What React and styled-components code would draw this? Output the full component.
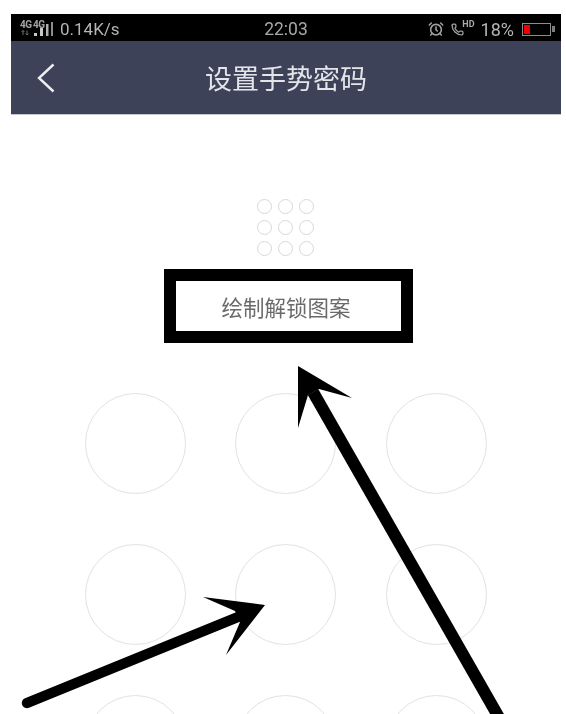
import React from 'react';
import styled, { createGlobalStyle } from 'styled-components';
import { AlarmClock, Phone } from 'lucide-react';

const GlobalStyle = createGlobalStyle`
  html, body {
    margin: 0;
    padding: 0;
    background: #fff;
  }
`;

const Page = styled.div`
  position: relative;
  width: 566px;
  height: 714px;
  padding: 14px 5px 0 11px;
  box-sizing: border-box;
  overflow: hidden;
  background: #fff;
  font-family: Roboto, 'Noto Sans CJK SC', sans-serif;
  filter: blur(0.45px);
`;

const StatusBar = styled.div`
  display: grid;
  grid-template-columns: 1fr auto 1fr;
  align-items: center;
  height: 27px;
  background: #000;
  color: #b4b4b4;
  font-size: 18px;
  line-height: 27px;
`;

const StatusLeft = styled.div`
  display: flex;
  align-items: center;
  padding-left: 9px;
`;

const StatusRight = styled.div`
  display: flex;
  align-items: center;
  justify-content: flex-end;
  padding-right: 7px;
`;

const Clock = styled.span`
  color: #a8a8a8;
  font-size: 17.5px;
  padding-top: 2px;
`;

const NetworkTag = styled.span`
  font-size: 10px;
  font-weight: 700;
  line-height: 10px;
  width: ${(p) => p.$width}px;
  margin-top: -7px;
  color: #a4a4a4;
  letter-spacing: -0.4px;
`;

const Signal = styled.svg`
  width: 33px;
  height: 18px;
  margin: 0 7px 0 -24px;
`;

const Speed = styled.span`
  font-size: 17px;
  padding-top: 2px;
`;

const AlarmIcon = styled(AlarmClock)`
  width: 16px;
  height: 16px;
  margin-top: 1px;
  stroke-width: 2.4;
  color: #a0a0a0;
`;

const PhoneIcon = styled(Phone)`
  width: 13px;
  height: 13px;
  margin: 2px 0 0 7px;
  stroke-width: 2.4;
  color: #a0a0a0;
`;

const HdTag = styled.span`
  font-size: 9px;
  font-weight: 700;
  line-height: 9px;
  margin: -8px 6px 0 -2px;
  color: #a8a8a8;
`;

const Percent = styled.span`
  padding-top: 2px;
  margin-right: 8px;
`;

const Battery = styled.div`
  position: relative;
  width: 29px;
  height: 13px;
  box-sizing: border-box;
  padding: 1px;
  border: 1.5px solid #8c8c8c;
  margin: 1px 3px 0 0;

  &::after {
    content: '';
    position: absolute;
    top: 2px;
    right: -5px;
    width: 3px;
    height: 6px;
    background: #7c7c7c;
  }
`;

const BatteryLevel = styled.div`
  height: 100%;
  background: #f00000;
`;

const NavBar = styled.div`
  display: grid;
  grid-template-columns: 1fr auto 1fr;
  align-items: center;
  height: 73px;
  background: #3e4258;
  border-bottom: 1px solid #c4c6d0;
`;

const BackIcon = styled.svg`
  width: 20px;
  height: 32px;
  margin-left: 25px;
  display: block;
`;

const Title = styled.div`
  color: #e4e5e9;
  font-family: 'Noto Sans CJK SC', sans-serif;
  font-size: 27px;
  font-weight: 400;
  line-height: 40px;
`;

const Content = styled.div`
  display: flex;
  flex-direction: column;
  align-items: center;
  padding-top: 84px;
`;

const Preview = styled.div`
  display: grid;
  grid-template-columns: repeat(3, 15px);
  grid-auto-rows: 15px;
  gap: 6px;
  margin-left: -2px;
`;

const PreviewDot = styled.span`
  border: 1.75px solid #d8d8d8;
  border-radius: 50%;
`;

const Hint = styled.div`
  width: 249px;
  height: 74px;
  box-sizing: border-box;
  margin: 13px 0 50px 5px;
  padding-right: 5px;
  border: 12px solid #000;
  display: flex;
  align-items: center;
  justify-content: center;
  color: #6a6a6a;
  font-family: 'Noto Sans CJK SC', sans-serif;
  font-size: 21.5px;
  font-weight: 400;
`;

const Pattern = styled.div`
  display: grid;
  grid-template-columns: repeat(3, 101px);
  grid-auto-rows: 101px;
  column-gap: 49.5px;
  row-gap: 50px;
  margin-left: -1px;
`;

const PatternNode = styled.span`
  border: 1.5px solid #e2e2e2;
  border-radius: 50%;
`;

const Annotations = styled.svg`
  position: absolute;
  top: 0;
  left: 0;
  width: 566px;
  height: 714px;
  pointer-events: none;
`;

const dots = Array.from({ length: 9 }, (_, i) => i);

export default function App() {
  return (
    <Page>
      <GlobalStyle />
      <StatusBar>
        <StatusLeft>
          <NetworkTag $width={13}>4G</NetworkTag>
          <NetworkTag $width={11}>4G</NetworkTag>
          <Signal viewBox="0 0 33 18">
            <path d="M3 15 V10.5 M1.6 12 L3 10.5 L4.4 12 M7 10.5 V15 M5.6 13.5 L7 15 L8.4 13.5" fill="none" stroke="#6e6e6e" strokeWidth="1" />
            <rect x="14" y="13" width="3" height="3" fill="#c8c8c8" />
            <rect x="20" y="8" width="3" height="8" fill="#c8c8c8" />
            <rect x="26" y="4" width="2.5" height="12" fill="#b0b0b0" />
            <rect x="31" y="2" width="2" height="14" fill="#8c8c8c" />
          </Signal>
          <Speed>0.14K/s</Speed>
        </StatusLeft>
        <Clock>22:03</Clock>
        <StatusRight>
          <AlarmIcon />
          <PhoneIcon />
          <HdTag>HD</HdTag>
          <Percent>18%</Percent>
          <Battery>
            <BatteryLevel style={{ width: '22%' }} />
          </Battery>
        </StatusRight>
      </StatusBar>
      <NavBar>
        <BackIcon viewBox="0 0 20 32">
          <path d="M17.5 2.5 L3 16 L17.5 29.5" fill="none" stroke="#eeeef0" strokeWidth="2.4" />
        </BackIcon>
        <Title>设置手势密码</Title>
      </NavBar>
      <Content>
        <Preview>
          {dots.map((dot) => (
            <PreviewDot key={dot} />
          ))}
        </Preview>
        <Hint>绘制解锁图案</Hint>
        <Pattern>
          {dots.map((dot) => (
            <PatternNode key={dot} />
          ))}
        </Pattern>
      </Content>
      <Annotations viewBox="0 0 566 714">
        <path d="M27 703 L238 617" fill="none" stroke="#000" strokeWidth="10.5" strokeLinecap="round" />
        <path d="M203 597 L265 605 L226 655 L240 622 L235 611 Z" fill="#000" />
        <path d="M313 392 L505 728" fill="none" stroke="#000" strokeWidth="12" />
        <path d="M298 366 L352 398 L319 389 L308 395 L298 428 Z" fill="#000" />
      </Annotations>
    </Page>
  );
}
